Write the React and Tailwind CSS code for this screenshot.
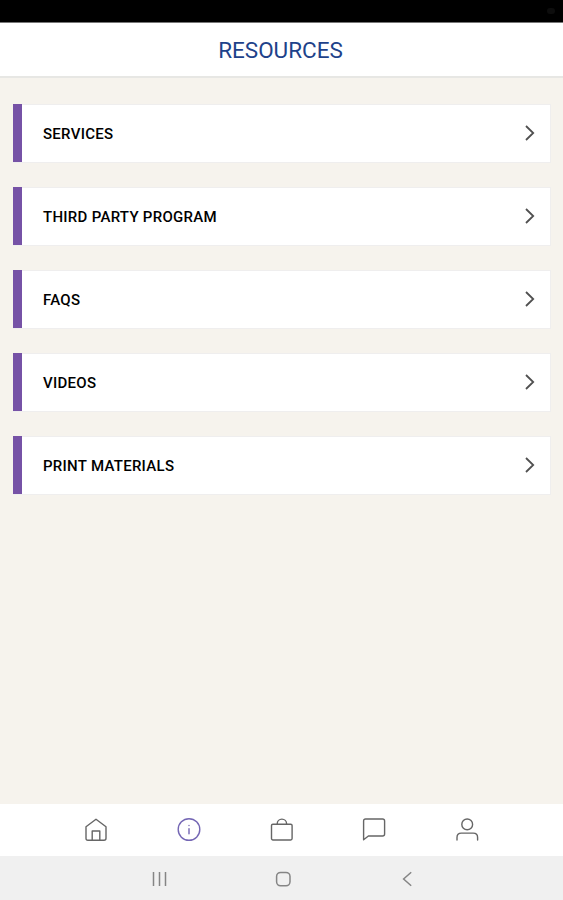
/**
 * Resources screen
 *
 * List of resource categories with the app tab bar
 * and the system navigation bar at the bottom.
 */

import React from 'react';

const resources = ['SERVICES', 'THIRD PARTY PROGRAM', 'FAQS', 'VIDEOS', 'PRINT MATERIALS'];

const ResourceCard = ({ title }) => (
  <button className="flex h-[59px] w-full items-center justify-between border border-l-0 border-[#efeeee] bg-white pr-[15px] text-left">
    <span className="flex items-center">
      <span className="-mt-px h-[58px] w-[9.5px] bg-[#7652a6]" />
      <span className="ml-[21px] text-[15px] font-medium leading-5 tracking-[0.28px] text-black">{title}</span>
    </span>
    <svg className="mb-px h-[16px] w-[10px]" viewBox="0 0 10 16" fill="none" stroke="#505050" strokeWidth="1.8">
      <path d="M1 1l7.2 7L1 15" />
    </svg>
  </button>
);

const TabIcon = ({ color = '#666666', children }) => (
  <svg
    className="h-6 w-6"
    viewBox="0 0 24 24"
    fill="none"
    stroke={color}
    strokeWidth="1.4"
    strokeLinecap="round"
    strokeLinejoin="round"
  >
    {children}
  </svg>
);

const TabBar = () => (
  <nav className="flex h-[52px] items-center justify-between bg-white pl-[84px] pr-[84px]">
    <TabIcon>
      <path d="M2 8.8L12 1.2l10 7.6v11.4q0 2-2 2H4q-2 0-2-2z" />
      <path d="M8.2 22v-9h7.6v9" />
    </TabIcon>
    <TabIcon color="#7466b4">
      <circle cx="12" cy="11.5" r="10.8" />
      <path d="M12 10.8v5M12 7.4v.1" />
    </TabIcon>
    <TabIcon>
      <rect x="1.5" y="6.2" width="20.6" height="15.8" rx="1.4" />
      <path d="M7.2 6a4.7 4.9 0 0 1 9.4 0" />
    </TabIcon>
    <TabIcon>
      <path d="M1.6 21.8V3q0-2 2-2h17q2 0 2 2v13q0 2-2 2H6.4z" />
    </TabIcon>
    <TabIcon>
      <circle cx="12.2" cy="6.4" r="5.4" />
      <path d="M2 22v-2.6q0-4.3 4.3-4.3h12q4.3 0 4.3 4.3V22" />
    </TabIcon>
  </nav>
);

const SystemBar = () => (
  <div className="flex h-11 items-center justify-between bg-[#f0f0f0] pl-[151px] pr-[148px]">
    <svg className="mt-[2px] h-4 w-4" viewBox="0 0 16 16" stroke="#858585" strokeWidth="1.5">
      <path d="M2.5 1v14M8.5 1v14M14.5 1v14" />
    </svg>
    <svg className="mt-[2px] h-4 w-4" viewBox="0 0 16 16" fill="none" stroke="#858585" strokeWidth="1.5">
      <rect x="1.6" y="1.4" width="13.4" height="13.4" rx="4" />
    </svg>
    <svg className="mt-[2px] h-4 w-4" viewBox="0 0 16 16" fill="none" stroke="#858585" strokeWidth="1.5">
      <path d="M12.2 1.3L4.6 8l7.6 6.7" />
    </svg>
  </div>
);

const App = () => {
  return (
    <div className="flex h-[900px] w-full flex-col overflow-hidden bg-[#f6f3ed] font-['Roboto',sans-serif]">
      {/* Status bar */}
      <div className="flex h-[23px] shrink-0 items-center justify-end border-b border-[#777777] bg-black pr-2">
        <span className="h-1.5 w-2 rounded-sm bg-[#0d0d0d]" />
      </div>

      <header className="flex h-[55px] shrink-0 items-center justify-center border-b-2 border-[#e7e7e4] bg-white">
        <h1 className="mr-[2px] mt-[1px] text-[22.5px] font-normal leading-7 text-[#1e428a]">RESOURCES</h1>
      </header>

      <main className="flex flex-1 flex-col gap-6 pl-[12.5px] pr-[12px] pt-[26px]">
        {resources.map((title) => (
          <ResourceCard key={title} title={title} />
        ))}
      </main>

      <TabBar />
      <SystemBar />
    </div>
  );
};

export default App;
